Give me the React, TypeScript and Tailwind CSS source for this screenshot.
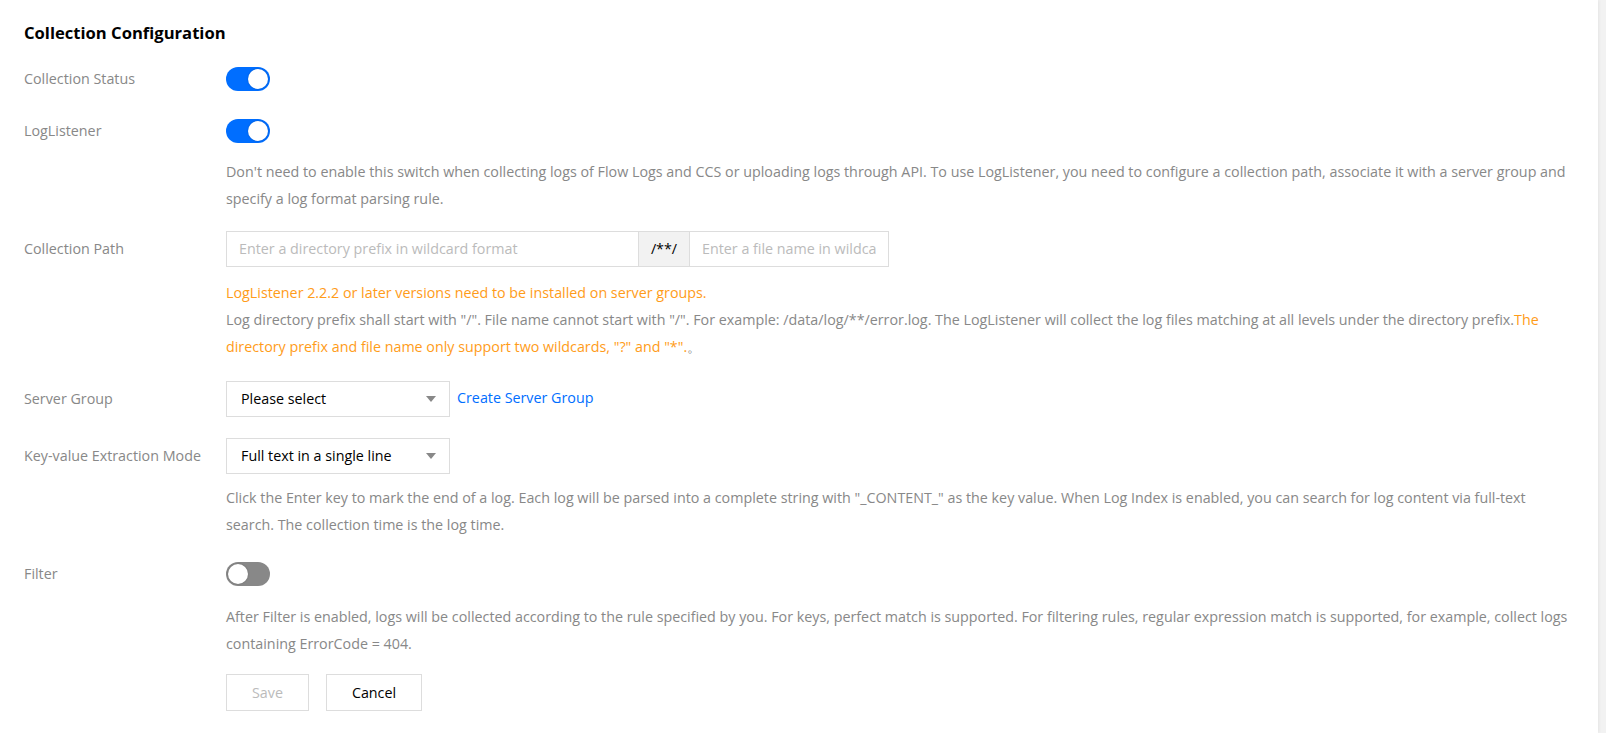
import React from 'react';

const font = { fontFamily: '"Open Sans", "Noto Sans", Arial, sans-serif' };

function Toggle({ on }: { on: boolean }) {
	return (
		<span
			className={`relative flex h-[24px] w-[44px] shrink-0 items-center rounded-full ${
				on ? 'bg-[#006eff]' : 'bg-[#888888]'
			}`}
		>
			<span
				className={`absolute top-[2px] h-[20px] w-[20px] rounded-full bg-white shadow-[0_0_2px_rgba(0,0,0,0.25)] ${
					on ? 'right-[2px]' : 'left-[2px]'
				}`}
			/>
		</span>
	);
}

function Caret() {
	return (
		<svg width="10" height="6" viewBox="0 0 10 6" className="shrink-0">
			<path d="M0 0 L10 0 L5 6 Z" fill="#888888" />
		</svg>
	);
}

function Select({ value }: { value: string }) {
	return (
		<div className="flex h-[36px] w-[224px] items-center justify-between border border-[#dddddd] bg-white pl-[14px] pr-[13px] text-[14.3px] text-[#000000]">
			<span>{value}</span>
			<Caret />
		</div>
	);
}

// label column, vertically centred on the first control
function Label({ children, h }: { children: React.ReactNode; h: string }) {
	return (
		<div className={`flex w-[202px] shrink-0 items-center pb-[1px] text-[14.3px] text-[#888888] ${h}`}>
			{children}
		</div>
	);
}

export default function App() {
	return (
		<div className="flex min-h-[733px] bg-[#f2f2f2]" style={font}>
			<div className="w-[1598px] shrink-0 bg-white pl-[24px] pr-[20px] pt-[21px] pb-[20px] shadow-[1px_0_3px_rgba(0,0,0,0.06)]">
				{/* Title */}
				<h1 className="h-[24px] text-[16.6px] font-bold leading-[24px] text-black">
					Collection Configuration
				</h1>

				{/* Collection Status */}
				<div className="mt-[22px] flex">
					<Label h="h-[24px]">Collection Status</Label>
					<Toggle on />
				</div>

				{/* LogListener */}
				<div className="mt-[28px] flex">
					<Label h="h-[24px]">LogListener</Label>
					<div className="min-w-0 flex-1">
						<Toggle on />
						<p className="mt-[15px] whitespace-nowrap text-[14.3px] leading-[27px] text-[#888888]">
							Don't need to enable this switch when collecting logs of Flow Logs and CCS or uploading logs
							through API. To use LogListener, you need to configure a collection path, associate it with a
							server group and
							<br />
							specify a log format parsing rule.
						</p>
					</div>
				</div>

				{/* Collection Path */}
				<div className="mt-[19px] flex">
					<Label h="h-[36px]">Collection Path</Label>
					<div className="min-w-0 flex-1">
						<div className="flex h-[36px] text-[14.3px]">
							<div className="flex w-[413px] items-center border border-[#dddddd] px-[12px] text-[#bbbbbb]">
								Enter a directory prefix in wildcard format
							</div>
							<div className="flex w-[50px] items-center justify-center border-y border-[#dddddd] bg-[#f2f2f2] text-[#000000]">
								/**/
							</div>
							<div className="flex w-[200px] items-center overflow-hidden whitespace-nowrap border border-[#dddddd] px-[12px] text-[#bbbbbb]">
								Enter a file name in wildca
							</div>
						</div>
						<div className="mt-[12px] whitespace-nowrap text-[14.3px] leading-[27px] text-[#888888]">
							<div className="text-[#ff9c19]">
								LogListener 2.2.2 or later versions need to be installed on server groups.
							</div>
							<div>
								Log directory prefix shall start with "/". File name cannot start with "/". For example:
								/data/log/**/error.log. The LogListener will collect the log files matching at all levels
								under the directory prefix.<span className="text-[#ff9c19]">The</span>
							</div>
							<div>
								<span className="text-[#ff9c19]">
									directory prefix and file name only support two wildcards, "?" and "*".
								</span>
								。
							</div>
						</div>
					</div>
				</div>

				{/* Server Group */}
				<div className="mt-[21px] flex">
					<Label h="h-[36px]">Server Group</Label>
					<div className="flex items-center gap-[7px]">
						<Select value="Please select" />
						<span className="pb-[2px] text-[14.3px] text-[#006eff]">Create Server Group</span>
					</div>
				</div>

				{/* Key-value Extraction Mode */}
				<div className="mt-[21px] flex">
					<Label h="h-[36px]">Key-value Extraction Mode</Label>
					<div className="min-w-0 flex-1">
						<Select value="Full text in a single line" />
						<p className="mt-[10px] whitespace-nowrap text-[14.3px] leading-[27px] text-[#888888]">
							Click the Enter key to mark the end of a log. Each log will be parsed into a complete string
							with "_CONTENT_" as the key value. When Log Index is enabled, you can search for log content
							via full-text
							<br />
							search. The collection time is the log time.
						</p>
					</div>
				</div>

				{/* Filter */}
				<div className="mt-[24px] flex">
					<Label h="h-[24px]">Filter</Label>
					<div className="min-w-0 flex-1">
						<Toggle on={false} />
						<p className="mt-[17px] whitespace-nowrap text-[14.3px] leading-[27px] text-[#888888]">
							After Filter is enabled, logs will be collected according to the rule specified by you. For
							keys, perfect match is supported. For filtering rules, regular expression match is supported,
							for example, collect logs
							<br />
							containing ErrorCode = 404.
						</p>

						{/* Actions */}
						<div className="mt-[17px] flex gap-[17px] text-[14.3px]">
							<button className="h-[37px] w-[83px] border border-[#dddddd] bg-white text-[#bbbbbb]">
								Save
							</button>
							<button className="h-[37px] w-[96px] border border-[#dddddd] bg-white text-[#000000]">
								Cancel
							</button>
						</div>
					</div>
				</div>
			</div>
		</div>
	);
}
